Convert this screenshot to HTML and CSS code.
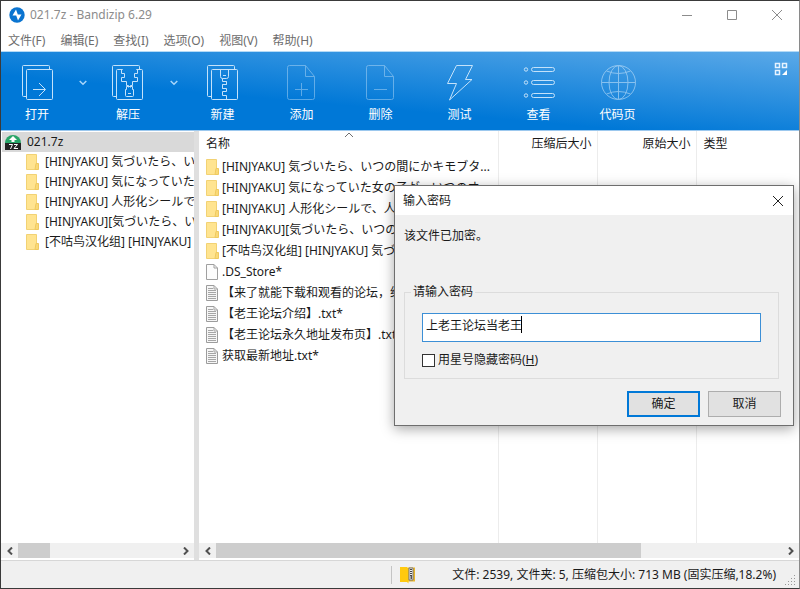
FILE: index.html
```html
<!DOCTYPE html>
<html lang="zh-CN">
<head>
    <meta charset="UTF-8">
    <meta name="viewport" content="width=device-width, initial-scale=1.0">
    <title>021.7z - Bandizip 6.29</title>
    <link rel="stylesheet" href="styles.css">
</head>
<body>
    <!-- shared icons -->
    <svg class="defs" width="0" height="0" aria-hidden="true">
        <symbol id="folder" viewBox="0 0 14 16">
            <path d="M1.500.5h10v15h-10z" fill="#ffe490" stroke="#f2d274"/>
            <path d="M11 9.500h2.500v6H10z" fill="#f9d978" stroke="#efc95f"/>
        </symbol>
        <symbol id="file" viewBox="0 0 14 16">
            <path d="M1.500.5h7.500l3.500 3.500v11.500h-11z" fill="#fcfcfc" stroke="#a0a0a0"/>
            <path d="M9 .5V4h3.500" fill="none" stroke="#a0a0a0"/>
        </symbol>
        <symbol id="text" viewBox="0 0 14 16">
            <path d="M1.500.5h7.500l3.500 3.500v11.500h-11z" fill="#f6f6f6" stroke="#9c9c9c"/>
            <path d="M9 .5V4h3.500M3 3.500h5M3 5.500h8M3 7.500h8M3 9.500h8M3 11.500h8M3 13.500h8" fill="none" stroke="#a6a6a6"/>
        </symbol>
        <symbol id="left" viewBox="0 0 8 8">
            <path d="M6 .5L2.500 4L6 7.500" fill="none" stroke="#505050" stroke-width="2"/>
        </symbol>
        <symbol id="right" viewBox="0 0 8 8">
            <path d="M2 .5L5.500 4L2 7.500" fill="none" stroke="#505050" stroke-width="2"/>
        </symbol>
        <symbol id="down" viewBox="0 0 8 6">
            <path d="M.7 1L4 4.300L7.300 1" fill="none" stroke="#a9d6fa" stroke-width="1.500"/>
        </symbol>
    </svg>

    <div class="window">
        <header class="titlebar">
            <svg class="logo" width="16" height="16" viewBox="0 0 16 16">
                <circle cx="8" cy="8" r="7.700" fill="#0a74d0"/>
                <path d="M7 2.500L3.500 8.500h3.700L9 13.500L12.500 7.500H8.800z" fill="#fff"/>
            </svg>
            <h1>021.7z - Bandizip 6.29</h1>
            <button class="win-btn" aria-label="最小化"><svg width="12" height="12"><path d="M1 6.500h10"/></svg></button>
            <button class="win-btn" aria-label="最大化"><svg width="12" height="12"><path d="M1.500 1.500h9v9h-9z"/></svg></button>
            <button class="win-btn" aria-label="关闭"><svg width="12" height="12"><path d="M1 1l10 10M11 1L1 11"/></svg></button>
        </header>

        <nav class="menu">
            <a href="#">文件(F)</a>
            <a href="#">编辑(E)</a>
            <a href="#">查找(I)</a>
            <a href="#">选项(O)</a>
            <a href="#">视图(V)</a>
            <a href="#">帮助(H)</a>
        </nav>

        <div class="toolbar">
            <button class="tool split">
                <svg width="36" height="36" viewBox="0 0 36 36">
                    <path d="M7.500 31.500h-3q-1 0-1-1v-29q0-1 1-1h25q1 0 1 1v3"/>
                    <rect x="7.500" y="4.500" width="26" height="30" rx="1"/>
                    <path d="M14 24.500h12M20 18l6.500 6.500L20 31"/>
                </svg>
                打开
            </button>
            <button class="drop" aria-label="打开选项"><svg width="8" height="6"><use href="#down"/></svg></button>
            <button class="tool split">
                <svg width="36" height="36" viewBox="0 0 36 36">
                    <path d="M6.500 31.500h-3q-1 0-1-1v-29q0-1 1-1h25q1 0 1 1v3"/>
                    <path d="M12.500 4.500h-5q-1 0-1 1v28q0 1 1 1h24q1 0 1-1v-28q0-1-1-1h-5"/>
                    <path d="M12.500 4.500h-1v4h3v4h-3v4h5v4h2v2M26.500 4.500h1v4h-3v4h3v4h-5v4h-2v2"/>
                    <path d="M16.500 21.500h6v3h1v6q0 1-1 1h-6q-1 0-1-1v-6h1zM18 28.500h3"/>
                </svg>
                解压
            </button>
            <button class="drop" aria-label="解压选项"><svg width="8" height="6"><use href="#down"/></svg></button>
            <button class="tool">
                <svg width="36" height="36" viewBox="0 0 36 36">
                    <path d="M6.500 31.500h-3q-1 0-1-1v-29q0-1 1-1h25q1 0 1 1v3"/>
                    <rect x="6.500" y="4.500" width="26" height="30" rx="1"/>
                    <path d="M15.500 4.500v7q0 2 2 2h4q2 0 2-2v-7M18 10.500h3M17.500 13.500v3h4v3h-4v4h4v3h-4v4h4v4M21.500 16.500v3M17.500 19.500v4"/>
                </svg>
                新建
            </button>
            <button class="tool off" disabled>
                <svg width="36" height="36" viewBox="0 0 36 36">
                    <path d="M5.500.5h16l9 11v21q0 2-2 2h-23q-2 0-2-2v-30q0-2 2-2M21.500.5v11h9M11 24.500h13M17.500 18v13"/>
                </svg>
                <span>添加</span>
            </button>
            <button class="tool off" disabled>
                <svg width="36" height="36" viewBox="0 0 36 36">
                    <path d="M5.500.5h16l9 11v21q0 2-2 2h-23q-2 0-2-2v-30q0-2 2-2M21.500.5v11h9M11 24.500h13"/>
                </svg>
                <span>删除</span>
            </button>
            <button class="tool">
                <svg width="36" height="36" viewBox="0 0 36 36">
                    <path d="M14.500.5h16L23.500 14.500h6.500L7.500 35L14.500 18.500H5.500z" stroke-linejoin="round"/>
                </svg>
                测试
            </button>
            <button class="tool">
                <svg width="36" height="36" viewBox="0 0 36 36">
                    <circle cx="5" cy="4.500" r="1.700"/><rect x="10.500" y="2.500" width="23" height="4" rx="2"/>
                    <circle cx="5" cy="17.500" r="1.700"/><rect x="10.500" y="15.500" width="23" height="4" rx="2"/>
                    <circle cx="5" cy="30.500" r="1.700"/><rect x="10.500" y="28.500" width="23" height="4" rx="2"/>
                </svg>
                查看
            </button>
            <button class="tool dim">
                <svg width="36" height="36" viewBox="0 0 36 36">
                    <circle cx="18.500" cy="17.500" r="17"/>
                    <ellipse cx="18.500" cy="17.500" rx="9.500" ry="17"/>
                    <path d="M18.500.5v34M1.500 17.500h34M6.500 6q12 5 24 0M6.500 29q12-5 24 0"/>
                </svg>
                <span>代码页</span>
            </button>
            <button class="layout" aria-label="布局">
                <svg width="14" height="14" viewBox="0 0 14 14">
                    <path d="M1.500 1.500h4v4h-4zM8.500 1.500h4v4h-4zM1.500 8.500h4v4h-4z" fill="none" stroke="#e6f3ff" stroke-width="1.500"/>
                    <path d="M13 8v5H8z" fill="#fff"/>
                </svg>
            </button>
        </div>

        <main class="content">
            <aside class="side">
                <ul class="tree">
                    <li class="root">
                        <svg width="16" height="16" viewBox="0 0 16 16">
                            <path d="M0 9a8 8 0 0 1 16 0z" fill="#27a567"/>
                            <path d="M8 2l4 4H9.500v2h-3V6H4z" fill="#fff"/>
                            <path d="M0 9h16v7H0z" fill="#222"/>
                            <path d="M4 10.500h3.500L5.500 15M9 10.500h3.500L9 14.500h4" fill="none" stroke="#fff"/>
                        </svg>
                        021.7z
                    </li>
                    <li><svg width="14" height="16"><use href="#folder"/></svg>[HINJYAKU] 気づいたら、い</li>
                    <li><svg width="14" height="16"><use href="#folder"/></svg>[HINJYAKU] 気になっていた</li>
                    <li><svg width="14" height="16"><use href="#folder"/></svg>[HINJYAKU] 人形化シールで</li>
                    <li><svg width="14" height="16"><use href="#folder"/></svg>[HINJYAKU][気づいたら、い</li>
                    <li><svg width="14" height="16"><use href="#folder"/></svg>[不咕鸟汉化组] [HINJYAKU]</li>
                </ul>
                <div class="scroll">
                    <button aria-label="向左"><svg width="8" height="8"><use href="#left"/></svg></button>
                    <div class="track"><div class="thumb side-thumb"></div></div>
                    <button aria-label="向右"><svg width="8" height="8"><use href="#right"/></svg></button>
                </div>
            </aside>

            <section class="list">
                <div class="table-wrap">
                    <table>
                        <colgroup><col class="c-name"><col class="c-size"><col class="c-size"><col></colgroup>
                        <thead>
                            <tr>
                                <th>名称<svg class="sort" width="10" height="6" viewBox="0 0 10 6"><path d="M1 5l4-4l4 4" fill="none" stroke="#707070"/></svg></th>
                                <th class="num">压缩后大小</th>
                                <th class="num">原始大小</th>
                                <th>类型</th>
                            </tr>
                        </thead>
                        <tbody>
                            <tr><td><div class="name"><svg width="14" height="16"><use href="#folder"/></svg>[HINJYAKU] 気づいたら、いつの間にかキモブタ...</div></td><td></td><td></td><td></td></tr>
                            <tr><td><div class="name"><svg width="14" height="16"><use href="#folder"/></svg>[HINJYAKU] 気になっていた女の子が、いつのオ</div></td><td></td><td></td><td></td></tr>
                            <tr><td><div class="name"><svg width="14" height="16"><use href="#folder"/></svg>[HINJYAKU] 人形化シールで、人</div></td><td></td><td></td><td></td></tr>
                            <tr><td><div class="name"><svg width="14" height="16"><use href="#folder"/></svg>[HINJYAKU][気づいたら、いつの</div></td><td></td><td></td><td></td></tr>
                            <tr><td><div class="name"><svg width="14" height="16"><use href="#folder"/></svg>[不咕鸟汉化组] [HINJYAKU] 気づ</div></td><td></td><td></td><td></td></tr>
                            <tr><td><div class="name"><svg width="14" height="16"><use href="#file"/></svg>.DS_Store*</div></td><td></td><td></td><td></td></tr>
                            <tr><td><div class="name"><svg width="14" height="16"><use href="#text"/></svg>【来了就能下载和观看的论坛，纯</div></td><td></td><td></td><td></td></tr>
                            <tr><td><div class="name"><svg width="14" height="16"><use href="#text"/></svg>【老王论坛介绍】.txt*</div></td><td></td><td></td><td></td></tr>
                            <tr><td><div class="name"><svg width="14" height="16"><use href="#text"/></svg>【老王论坛永久地址发布页】.txt*</div></td><td></td><td></td><td></td></tr>
                            <tr><td><div class="name"><svg width="14" height="16"><use href="#text"/></svg>获取最新地址.txt*</div></td><td></td><td></td><td></td></tr>
                            <tr class="rest"><td></td><td></td><td></td><td></td></tr>
                        </tbody>
                    </table>
                </div>
                <div class="scroll">
                    <button aria-label="向左"><svg width="8" height="8"><use href="#left"/></svg></button>
                    <div class="track"><div class="thumb list-thumb"></div></div>
                    <button aria-label="向右"><svg width="8" height="8"><use href="#right"/></svg></button>
                </div>
            </section>
        </main>

        <footer class="status">
            <div class="status-icon">
                <svg width="16" height="18" viewBox="0 0 16 18">
                    <path d="M8 1.500h7v14H8z" fill="#e9b52a"/>
                    <path d="M0 1h7l1.500 1.500v15L7 16H0z" fill="#ffc90e"/>
                    <path d="M9 2h4v12H9z" fill="#eee" stroke="#777"/>
                    <path d="M11 3v7" stroke="#444" stroke-width="2" stroke-dasharray="1 1"/>
                    <path d="M10.500 10h1.500v3h-1.500z" fill="#555"/>
                </svg>
            </div>
            <span>文件: 2539, 文件夹: 5, 压缩包大小: 713 MB (固实压缩,18.2%)</span>
            <svg class="grip" width="11" height="11" viewBox="0 0 11 11">
                <path d="M9 1.500h1M6 4.500h1M9 4.500h1M3 7.500h1M6 7.500h1M9 7.500h1M0 10.500h1M3 10.500h1M6 10.500h1M9 10.500h1" stroke="#999"/>
            </svg>
        </footer>
    </div>

    <form class="dialog" role="dialog" aria-labelledby="dialog-title">
        <div class="dialog-head">
            <h2 id="dialog-title">输入密码</h2>
            <button type="button" class="close" aria-label="关闭"><svg width="12" height="12"><path d="M1 1l10 10M11 1L1 11"/></svg></button>
        </div>
        <div class="dialog-body">
            <p>该文件已加密。</p>
            <fieldset>
                <legend><label for="password">请输入密码</label></legend>
                <div class="field">
                    <input type="text" id="password" value="上老王论坛当老王">
                    <span class="caret"></span>
                </div>
                <div class="check">
                    <input type="checkbox" id="hide">
                    <label for="hide">用星号隐藏密码(<u>H</u>)</label>
                </div>
            </fieldset>
            <div class="actions">
                <button type="button" class="btn ok">确定</button>
                <button type="button" class="btn">取消</button>
            </div>
        </div>
    </form>
</body>
</html>
```
FILE: styles.css
```css
* {
    box-sizing: border-box;
}

body {
    margin: 0;
    font-family: "Noto Sans", "Noto Sans CJK SC", sans-serif;
    font-size: 12px;
    line-height: 20px;
    color: #1a1a1a;
}

button, input {
    font: inherit;
    color: inherit;
    margin: 0;
}

button {
    padding: 0;
    border: 0;
    background: none;
}

svg {
    display: block;
    flex: none;
}

.defs {
    position: absolute;
}

.window {
    height: 100vh;
    display: flex;
    flex-direction: column;
    background: #fff;
    border: 1px solid #3a3a3a;
    border-right-color: #8a8a8a;
    overflow: hidden;
}

/* title and menu */
.titlebar {
    display: flex;
    align-items: center;
    height: 28px;
    padding-left: 8px;
}

.titlebar h1 {
    flex: 1;
    margin: 0 0 0 5px;
    font-size: 12px;
    font-weight: normal;
    color: #8c8c8c;
}

.win-btn {
    width: 45px;
    height: 28px;
    display: flex;
    align-items: center;
    justify-content: center;
}

.win-btn path {
    fill: none;
    stroke: #8c8c8c;
}

.menu {
    display: flex;
    gap: 15px;
    height: 22px;
    padding: 2px 0 0 7px;
}

.menu a {
    color: #6d6d6d;
    text-decoration: none;
}

/* toolbar */
.toolbar {
    display: flex;
    height: 80px;
    background: linear-gradient(5deg, #0078d7 37%, #5ba9e8 100%);
    border-top: 1px solid #b4daf6;
    border-bottom: 1px solid #9cc8ee;
    color: #fff;
}

.tool {
    width: 79px;
    display: flex;
    flex-direction: column;
    align-items: center;
    padding-top: 13px;
    gap: 4px;
}

.tool.split {
    width: 72px;
}

.tool svg {
    fill: none;
    stroke: #c4e2fa;
}

.tool.off svg {
    opacity: 0.45;
}

.tool.dim svg {
    opacity: 0.6;
}

.tool span {
    color: #fff;
}

.drop {
    width: 19px;
    height: 62px;
    display: flex;
    align-items: center;
    justify-content: center;
}

.layout {
    margin-left: auto;
    padding: 10px 11px;
    align-self: flex-start;
}

/* panes */
.content {
    flex: 1;
    display: flex;
    min-height: 0;
}

.side {
    width: 198px;
    border-right: 5px solid #dfdfdf;
    display: flex;
    flex-direction: column;
}

.tree {
    flex: 1;
    margin: 0;
    padding: 1px 0 0 1px;
    list-style: none;
    overflow: hidden;
}

.tree li {
    display: flex;
    align-items: center;
    gap: 6px;
    height: 20px;
    padding-left: 23px;
    white-space: nowrap;
}

.tree .root {
    padding-left: 3px;
    background: #d9d9d9;
}

.list {
    flex: 1;
    min-width: 0;
    display: flex;
    flex-direction: column;
}

.table-wrap {
    flex: 1;
    min-height: 0;
}

table {
    width: 100%;
    height: 100%;
    table-layout: fixed;
    border-collapse: collapse;
}

.c-name {
    width: 299px;
}

.c-size {
    width: 99px;
}

th {
    position: relative;
    height: 25px;
    padding: 0 5px 0 7px;
    font-weight: normal;
    text-align: left;
}

th.num {
    text-align: right;
}

.sort {
    position: absolute;
    top: 1px;
    left: 50%;
    margin-left: -4px;
}

td {
    height: 21px;
    padding: 0;
}

.rest td {
    height: auto;
}

th:not(:last-child), td:not(:last-child) {
    border-right: 1px solid #ececec;
}

.name {
    display: flex;
    align-items: center;
    gap: 3px;
    padding-left: 6px;
    white-space: nowrap;
    overflow: hidden;
}

/* scroll bars */
.scroll {
    display: flex;
    height: 15px;
    margin-bottom: 2px;
    background: #f0f0f0;
}

.scroll button {
    width: 17px;
    display: flex;
    align-items: center;
    justify-content: center;
}

.track {
    flex: 1;
}

.thumb {
    height: 100%;
    background: #cdcdcd;
}

.side-thumb {
    width: 20%;
}

.list-thumb {
    width: 75%;
}

/* status bar */
.status {
    display: flex;
    align-items: center;
    justify-content: flex-end;
    height: 28px;
    background: #f0f0f0;
    border-top: 1px solid #d7d7d7;
}

.status-icon {
    border-left: 1px solid #c4c4c4;
    padding-left: 8px;
    margin-right: 36px;
}

.grip {
    align-self: flex-end;
    margin: 0 3px 3px 9px;
}

/* password dialog */
.dialog {
    position: absolute;
    top: 185px;
    right: 6px;
    width: 400px;
    background: #f0f0f0;
    border: 1px solid #6e6e6e;
    box-shadow: 0 3px 12px rgba(0, 0, 0, 0.35);
}

.dialog-head {
    display: flex;
    align-items: center;
    justify-content: space-between;
    height: 29px;
    padding: 0 9px 0 8px;
    background: #fff;
}

.dialog-head h2 {
    margin: 0;
    font-size: 12px;
    font-weight: normal;
}

.close path {
    fill: none;
    stroke: #222;
}

.dialog-body {
    padding: 11px 12px 8px 9px;
}

.dialog-body p {
    margin: 0 0 36px;
}

fieldset {
    margin: 0 2px 12px 0;
    padding: 11px 17px 8px;
    border: 1px solid #dcdcdc;
}

legend {
    margin-left: -11px;
    padding: 0 2px;
}

.field {
    position: relative;
    margin-bottom: 8px;
}

.field input {
    display: block;
    width: 100%;
    height: 29px;
    padding: 0 3px 5px;
    background: #fff;
    border: 1px solid #3c8fd6;
    outline: none;
}

.caret {
    position: absolute;
    top: 3px;
    left: 99px;
    width: 1px;
    height: 17px;
    background: #000;
}

.check {
    display: flex;
    align-items: center;
    gap: 3px;
}

.check input {
    appearance: none;
    width: 13px;
    height: 13px;
    background: #fff;
    border: 1px solid #333;
}

.actions {
    display: flex;
    justify-content: flex-end;
    gap: 8px;
}

.btn {
    width: 73px;
    height: 26px;
    background: #e1e1e1;
    border: 1px solid #adadad;
}

.btn.ok {
    border: 2px solid #0078d7;
}
```
